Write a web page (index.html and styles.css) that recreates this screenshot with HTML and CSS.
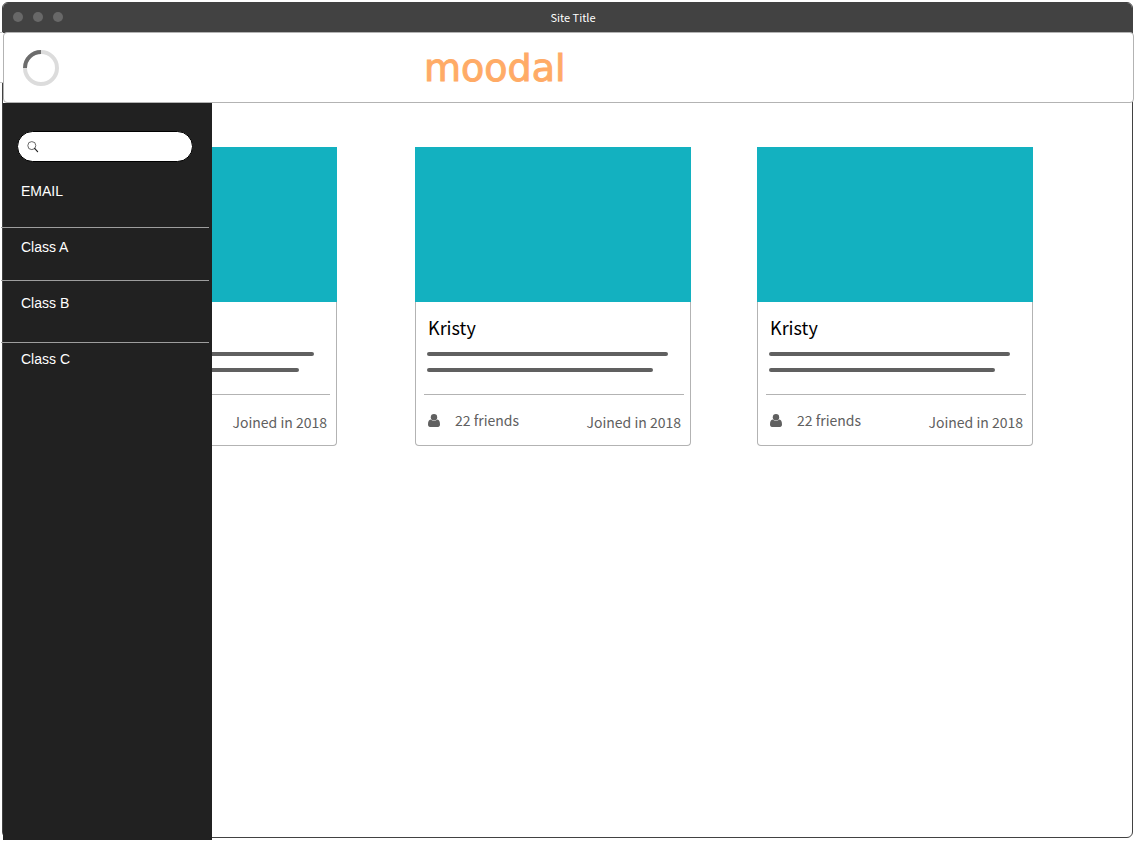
FILE: index.html
```html
<!DOCTYPE html>
<html lang="en">
<head>
<meta charset="utf-8">
<meta name="viewport" content="width=device-width, initial-scale=1">
<title>Site Title</title>
<link rel="stylesheet" href="styles.css">
</head>
<body>
<div class="window">
  <div class="titlebar">
    <div class="dots"><span class="dot"></span><span class="dot"></span><span class="dot"></span></div>
    <span class="title">Site Title</span>
  </div>
  <header class="header">
    <svg class="spinner" viewBox="0 0 36 36" aria-hidden="true">
      <circle cx="18" cy="18" r="16" fill="none" stroke="#dcdcdc" stroke-width="4"/>
      <path d="M2 18A16 16 0 0 1 18 2" fill="none" stroke="#6c6c6c" stroke-width="4"/>
    </svg>
    <h1 class="logo">moodal</h1>
  </header>
  <div class="content">
    <aside class="sidebar">
      <label class="search">
        <svg class="search-icon" viewBox="0 0 12 12" aria-hidden="true">
          <circle cx="4.8" cy="4.6" r="4" fill="none" stroke="#444" stroke-width=".8"/>
          <path d="M7.6 7.4L10.6 10.6" stroke="#222" stroke-width="1.2" stroke-linecap="round"/>
        </svg>
        <input class="search-input" type="search" aria-label="Search">
      </label>
      <nav>
        <ul class="menu">
          <li class="item item-email"><a href="#">EMAIL</a></li>
          <li class="item item-a"><a href="#">Class A</a></li>
          <li class="item item-b"><a href="#">Class B</a></li>
          <li class="item item-c"><a href="#">Class C</a></li>
        </ul>
      </nav>
    </aside>
    <main class="cards">
      <article class="card">
        <div class="cover"></div>
        <h2 class="name">Kristy</h2>
        <div class="bar"></div>
        <div class="bar bar-short"></div>
        <footer class="meta">
          <span class="friends"><svg class="person" viewBox="0 0 12 14" aria-hidden="true"><path d="M0 11.600C0 8.800 .8 6.800 2.700 6.600C4.600 8.300 7.400 8.300 9.300 6.600C11.200 6.800 12 8.800 12 11.600C12 13.200 11.200 14 10 14H2C.8 14 0 13.200 0 11.600Z"/><circle cx="6" cy="4.200" r="3.200"/></svg>22 friends</span>
          <span class="joined">Joined in 2018</span>
        </footer>
      </article>
      <article class="card">
        <div class="cover"></div>
        <h2 class="name">Kristy</h2>
        <div class="bar"></div>
        <div class="bar bar-short"></div>
        <footer class="meta">
          <span class="friends"><svg class="person" viewBox="0 0 12 14" aria-hidden="true"><path d="M0 11.600C0 8.800 .8 6.800 2.700 6.600C4.600 8.300 7.400 8.300 9.300 6.600C11.200 6.800 12 8.800 12 11.600C12 13.200 11.200 14 10 14H2C.8 14 0 13.200 0 11.600Z"/><circle cx="6" cy="4.200" r="3.200"/></svg>22 friends</span>
          <span class="joined">Joined in 2018</span>
        </footer>
      </article>
      <article class="card">
        <div class="cover"></div>
        <h2 class="name">Kristy</h2>
        <div class="bar"></div>
        <div class="bar bar-short"></div>
        <footer class="meta">
          <span class="friends"><svg class="person" viewBox="0 0 12 14" aria-hidden="true"><path d="M0 11.600C0 8.800 .8 6.800 2.700 6.600C4.600 8.300 7.400 8.300 9.300 6.600C11.200 6.800 12 8.800 12 11.600C12 13.200 11.200 14 10 14H2C.8 14 0 13.200 0 11.600Z"/><circle cx="6" cy="4.200" r="3.200"/></svg>22 friends</span>
          <span class="joined">Joined in 2018</span>
        </footer>
      </article>
    </main>
  </div>
</div>
</body>
</html>
```
FILE: styles.css
```css
* {
  box-sizing: border-box;
}

body {
  margin: 0;
  padding: 2px 2px 9px;
  background: #fff;
  font-family: "Noto Sans CJK SC", "Noto Sans", sans-serif;
}

.window {
  display: flex;
  flex-direction: column;
  min-height: calc(100vh - 11px);
  border: 1px solid #424242;
  border-radius: 6px;
}

.titlebar {
  position: relative;
  display: flex;
  align-items: center;
  justify-content: center;
  height: 30px;
  padding: 0 0 2px 11px;
  background: #424242;
  border-radius: 5px 5px 0 0;
  color: #fff;
}

.dots {
  position: absolute;
  left: 10px;
  display: flex;
  gap: 10px;
}

.dot {
  width: 10px;
  height: 10px;
  border-radius: 50%;
  background: #686868;
}

.title {
  font-size: 11px;
  line-height: 16px;
}

.header {
  position: relative;
  z-index: 2;
  display: flex;
  align-items: center;
  height: 71px;
  margin: -1px -2px 0 0;
  padding-left: 19px;
  background: #fff;
  border: 1px solid #b3b3b3;
  border-radius: 4px;
}

/* Tab edge that sticks out past the window frame */
.header::before {
  content: "";
  position: absolute;
  top: -1px;
  left: -4px;
  width: 3px;
  height: 49px;
  background: #fff;
  border: solid #c8c8c8;
  border-width: 1px 0;
}

.spinner {
  width: 36px;
  height: 36px;
}

.logo {
  margin: 0 0 0 365px;
  color: #ffab66;
  font: 400 38px/44px "DejaVu Sans", sans-serif;
  -webkit-text-stroke: 1px #ffab66;
}

.content {
  position: relative;
  flex: 1;
}

.sidebar {
  position: absolute;
  top: 0;
  bottom: -3px;
  left: 0;
  z-index: 1;
  width: 209px;
  padding-top: 28px;
  background: #212121;
  font-family: "Liberation Sans", Arial, sans-serif;
}

.search {
  display: flex;
  align-items: center;
  gap: 4px;
  height: 31px;
  margin: 0 19px 19px 14px;
  padding: 0 12px 0 9px;
  background: #fff;
  border: 1px solid #000;
  border-radius: 16px;
}

.search-icon {
  flex: none;
  width: 12px;
  height: 12px;
}

.search-input {
  flex: 1;
  min-width: 0;
  padding: 0;
  border: 0;
  outline: 0;
  background: transparent;
  font: 14px/20px "Liberation Sans", Arial, sans-serif;
}

.menu {
  margin: 0 3px 0 -2px;
  padding: 0;
  list-style: none;
}

.item {
  padding-left: 20px;
  border-bottom: 1px solid #9e9e9e;
  font-size: 14px;
  line-height: 20px;
}

.item a {
  color: #fff;
  text-decoration: none;
}

.item-email {
  padding-bottom: 26px;
}

.item-a {
  padding-top: 9px;
  padding-bottom: 23px;
}

.item-b {
  padding-top: 12px;
  padding-bottom: 29px;
}

.item-c {
  padding-top: 6px;
  border-bottom: 0;
}

.cards {
  display: flex;
  gap: 66px;
  padding: 44px 0 44px 58px;
}

.card {
  flex: none;
  width: 276px;
  border: 1px solid #b3b3b3;
  border-top: 0;
  border-radius: 0 0 4px 4px;
}

.card:first-child {
  margin-right: 12px;
}

.cover {
  height: 155px;
  margin: 0 -1px;
  background: #13b1c0;
}

.name {
  margin: 13px 12px;
  color: #000;
  font-size: 18px;
  font-weight: 400;
  line-height: 24px;
}

.bar {
  height: 4px;
  margin: 0 22px 12px 11px;
  background: #606060;
  border-radius: 2px;
}

.bar-short {
  margin: 0 37px 22px 11px;
}

.meta {
  display: flex;
  justify-content: space-between;
  height: 51px;
  margin: 0 6px 0 8px;
  padding: 15px 3px 13px 4px;
  border-top: 1px solid #b3b3b3;
  color: #606060;
  font-size: 14px;
  line-height: 20px;
}

.friends {
  display: flex;
  align-items: center;
  align-self: flex-start;
  gap: 15px;
}

.person {
  width: 12px;
  height: 14px;
  fill: #606060;
}

.joined {
  align-self: flex-end;
}
```
